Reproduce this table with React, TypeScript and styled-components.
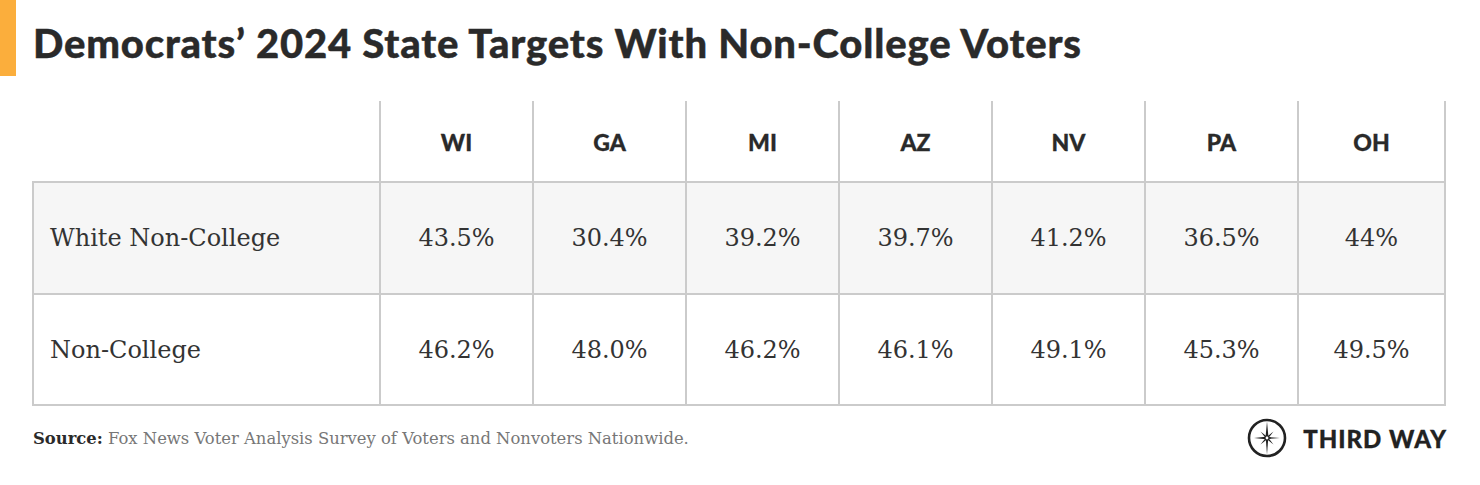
import React from "react";
import styled, { createGlobalStyle } from "styled-components";

const GlobalStyle = createGlobalStyle`
    html, body {
        margin: 0;
        padding: 0;
        background: #ffffff;
    }
`;

const states = ["WI", "GA", "MI", "AZ", "NV", "PA", "OH"];

const rows = [
    { label: "White Non-College", values: ["43.5%", "30.4%", "39.2%", "39.7%", "41.2%", "36.5%", "44%"], shaded: true },
    { label: "Non-College", values: ["46.2%", "48.0%", "46.2%", "46.1%", "49.1%", "45.3%", "49.5%"], shaded: false },
];

function CompassLogo() {
    return (
        <svg width="40" height="40" viewBox="0 0 40 40">
            <circle cx="20" cy="20" r="18" fill="none" stroke="#222" strokeWidth="2.6" />
            <polygon points="20,3.5 21.4,18.6 20,36.5 18.6,18.6" fill="#222" />
            <polygon points="7,20 18.6,18.8 33,20 18.6,21.2" fill="#222" />
            <polygon points="13.5,13.5 20.8,19.2 26.5,26.5 19.2,20.8" fill="#222" />
            <polygon points="26.5,13.5 20.8,20.8 13.5,26.5 19.2,19.2" fill="#222" />
            <circle cx="20" cy="20" r="1.4" fill="#fff" />
        </svg>
    );
}

function App() {
    return (
        <Page>
            <GlobalStyle />
            <TitleBar>
                <Accent />
                <Title>Democrats’ 2024 State Targets With Non-College Voters</Title>
            </TitleBar>

            <Table>
                <HeadCell $first />
                {states.map((s) => (
                    <HeadCell key={s}>{s}</HeadCell>
                ))}
                {rows.map((row) => (
                    <React.Fragment key={row.label}>
                        <LabelCell $shaded={row.shaded}>{row.label}</LabelCell>
                        {row.values.map((v, i) => (
                            <ValueCell key={i} $shaded={row.shaded}>
                                {v}
                            </ValueCell>
                        ))}
                    </React.Fragment>
                ))}
            </Table>

            <Footer>
                <Source>
                    <b>Source:</b> Fox News Voter Analysis Survey of Voters and Nonvoters Nationwide.
                </Source>
                <Brand>
                    <CompassLogo />
                    <BrandName>THIRD WAY</BrandName>
                </Brand>
            </Footer>
        </Page>
    );
}

const Page = styled.div`
    width: 1480px;
    height: 485px;
    background: #fff;
    overflow: hidden;
`;

const TitleBar = styled.div`
    display: flex;
    align-items: center;
    height: 76px;
`;

const Accent = styled.div`
    width: 16px;
    height: 76px;
    background: #fbae3c;
`;

const Title = styled.h1`
    margin: 0 0 0 17px;
    padding-top: 10px;
    font-family: "Lato", sans-serif;
    font-weight: 900;
    font-size: 40px;
    color: #2a2a2a;
    letter-spacing: 0.82px;
    -webkit-text-stroke: 0.4px #2a2a2a;
`;

const Table = styled.div`
    display: grid;
    grid-template-columns: 349px repeat(6, 153px) 147px;
    grid-template-rows: 82px 112px 111px;
    margin: 25px 0 0 32px;
    width: 1414px;
`;

const Cell = styled.div`
    box-sizing: border-box;
    display: flex;
    align-items: center;
    border-right: 2px solid #cbcbcb;
    border-bottom: 2px solid #cbcbcb;
`;

const HeadCell = styled(Cell)<{ $first?: boolean }>`
    justify-content: center;
    font-family: "Lato", sans-serif;
    font-weight: 900;
    font-size: 23px;
    color: #2a2a2a;
    padding-top: 2px;
    -webkit-text-stroke: 0.3px #2a2a2a;
`;

const LabelCell = styled(Cell)<{ $shaded: boolean }>`
    border-left: 2px solid #cbcbcb;
    padding-left: 16px;
    background: ${(p) => (p.$shaded ? "#f6f6f6" : "#fff")};
    font-family: "DejaVu Serif", serif;
    font-size: 24px;
    color: #333;
`;

const ValueCell = styled(Cell)<{ $shaded: boolean }>`
    justify-content: center;
    background: ${(p) => (p.$shaded ? "#f6f6f6" : "#fff")};
    font-family: "DejaVu Serif", serif;
    font-size: 24px;
    color: #333;
`;

const Footer = styled.div`
    display: flex;
    align-items: center;
    justify-content: space-between;
    width: 1414px;
    margin: 12px 0 0 33px;
`;

const Source = styled.div`
    font-family: "DejaVu Serif", serif;
    font-size: 16.4px;
    color: #777;

    b {
        color: #2a2a2a;
    }
`;

const Brand = styled.div`
    display: flex;
    align-items: center;
    gap: 16px;
`;

const BrandName = styled.span`
    font-family: "Lato", sans-serif;
    font-weight: 900;
    font-size: 24px;
    color: #222;
    letter-spacing: 1px;
    -webkit-text-stroke: 0.3px #222;
`;

export default App;
